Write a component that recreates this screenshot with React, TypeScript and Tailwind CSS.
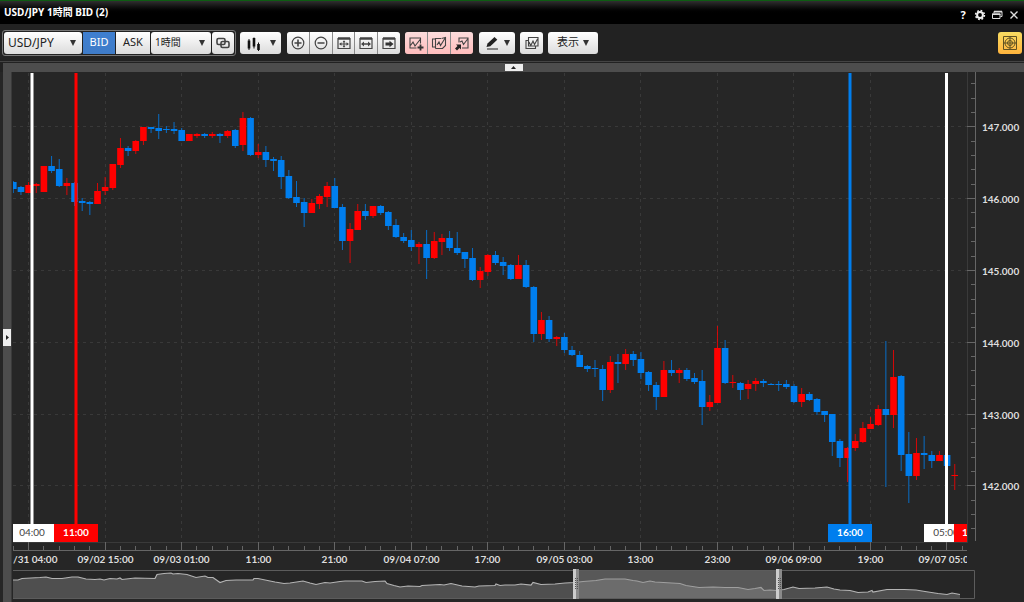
import { useState } from "react";
import type { ReactNode } from "react";

// [side, high, bodyTop, bodyBottom, low]
type Candle = ["u" | "d", number, number, number, number];

const STEP = 7.654;
const FIRST_X = 13.3;
const UP = "#ff0000";
const DOWN = "#007eee";

const candles: Candle[] = [
  ["d", 181, 182, 189, 193], ["d", 186, 187, 192, 195], ["u", 182, 185, 193, 193], ["u", 183, 184, 186, 193],
  ["u", 166, 166, 192, 192], ["d", 156, 166, 171, 173], ["d", 159, 169, 186, 187], ["u", 178, 183, 186, 195],
  ["d", 182, 183, 202, 206], ["d", 198, 201, 203, 211], ["d", 201, 202, 204, 215], ["u", 183, 191, 204, 204],
  ["u", 177, 187, 191, 195], ["u", 164, 164, 188, 190], ["u", 138, 148, 165, 168], ["d", 146, 148, 151, 156],
  ["u", 140, 141, 151, 154], ["u", 127, 127, 141, 145], ["d", 127, 127, 129, 133], ["d", 114, 128, 131, 139],
  ["d", 126, 129, 130, 133], ["d", 122, 129, 131, 134], ["d", 128, 130, 141, 141], ["u", 134, 134, 141, 141],
  ["u", 133, 134, 136, 138], ["d", 133, 134, 136, 138], ["u", 132, 134, 136, 138], ["d", 133, 134, 136, 143],
  ["u", 130, 131, 136, 138], ["d", 129, 130, 146, 148], ["u", 112, 118, 145, 151], ["d", 117, 118, 155, 156],
  ["u", 144, 152, 155, 158], ["d", 146, 152, 160, 167], ["d", 157, 159, 161, 171], ["d", 156, 160, 177, 189],
  ["d", 170, 176, 198, 199], ["d", 181, 197, 203, 207], ["d", 198, 202, 213, 227], ["u", 199, 203, 213, 213],
  ["u", 194, 196, 204, 209], ["u", 182, 186, 197, 207], ["d", 178, 186, 208, 208], ["d", 204, 207, 241, 250],
  ["u", 223, 229, 241, 263], ["u", 204, 211, 230, 230], ["d", 204, 211, 216, 220], ["u", 206, 206, 216, 218],
  ["d", 205, 206, 213, 215], ["d", 211, 212, 226, 230], ["d", 219, 225, 237, 238], ["d", 233, 237, 241, 243],
  ["d", 230, 240, 247, 251], ["u", 242, 244, 247, 264], ["d", 230, 244, 258, 279], ["u", 232, 241, 258, 259],
  ["u", 234, 238, 242, 255], ["d", 231, 238, 248, 251], ["d", 232, 248, 253, 255], ["d", 252, 252, 259, 268],
  ["d", 248, 258, 280, 281], ["u", 267, 271, 280, 288], ["u", 254, 255, 272, 276], ["d", 251, 255, 263, 265],
  ["d", 257, 262, 266, 275], ["d", 264, 265, 279, 280], ["u", 255, 265, 279, 279], ["d", 260, 265, 287, 288],
  ["d", 286, 287, 334, 342], ["u", 312, 320, 334, 340], ["d", 316, 320, 339, 342], ["u", 336, 337, 339, 346],
  ["d", 333, 337, 350, 353], ["d", 346, 350, 355, 356], ["d", 351, 355, 367, 367], ["d", 365, 366, 369, 372],
  ["d", 360, 368, 369, 377], ["d", 365, 369, 390, 401], ["u", 356, 362, 390, 393], ["d", 354, 362, 364, 383],
  ["u", 349, 354, 364, 370], ["d", 351, 354, 360, 366], ["d", 352, 359, 373, 379], ["d", 371, 372, 385, 391],
  ["d", 382, 385, 397, 410], ["u", 361, 370, 397, 397], ["d", 360, 370, 373, 376], ["u", 368, 370, 373, 383],
  ["d", 368, 370, 379, 381], ["d", 373, 378, 382, 384], ["d", 370, 381, 407, 425], ["u", 395, 402, 407, 411],
  ["u", 326, 348, 403, 403], ["d", 340, 348, 383, 384], ["u", 375, 382, 383, 388], ["d", 382, 383, 390, 400],
  ["u", 380, 384, 389, 399], ["u", 378, 381, 384, 391], ["d", 379, 381, 383, 387], ["d", 383, 384, 385, 385],
  ["d", 381, 384, 385, 391], ["d", 380, 384, 387, 389], ["d", 384, 386, 402, 403], ["u", 388, 394, 402, 407],
  ["d", 392, 394, 400, 401], ["d", 398, 399, 412, 415], ["d", 411, 411, 415, 422], ["d", 414, 414, 442, 456],
  ["d", 439, 441, 458, 467], ["u", 447, 448, 458, 482], ["u", 434, 441, 448, 451], ["u", 422, 428, 442, 443],
  ["u", 417, 424, 429, 429], ["u", 405, 409, 425, 426], ["d", 341, 409, 415, 487], ["u", 350, 377, 415, 428],
  ["d", 375, 376, 455, 471], ["d", 432, 454, 476, 503], ["u", 438, 453, 476, 480], ["d", 436, 453, 455, 469],
  ["d", 451, 455, 461, 468], ["u", 451, 455, 461, 461], ["d", 454, 455, 466, 466], ["u", 464, 475, 476, 490],
];

// the first label starts outside the plot, so only its tail is kept
const timeLabels = [
  "/31 04:00", "09/02 15:00", "09/03 01:00", "11:00", "21:00", "09/04 07:00", "17:00",
  "09/05 03:00", "13:00", "23:00", "09/06 09:00", "19:00", "09/07 05:00",
];
const priceLabels = ["147.000", "146.000", "145.000", "144.000", "143.000", "142.000"];

const timeX = (i: number) => Math.round(28 + i * STEP) + 0.5;
const priceY = (i: number) => Math.round(126.3 + i * 71.8) + 0.5;

const overview =
  "13,580 18,580 22,578.5 40,577.5 46,577 52,578.5 62,578.5 72,577 78,577 86,579 95,579.5 100,579 104,580 110,578.5 117,579 120,578 122,579.5 135,578 155,578.5 157,574.5 164,573.5 171,573 173,574 178,573.5 187,574.5 196,577.5 205,576 208,577.5 213,577.5 220,582.5 226,580.5 236,580 253,580 254,578.5 258,578.5 270,581 275,582 284,583.5 290,583 303,581 310,583 316,584.5 325,582.5 330,583 340,581.5 345,581 362,581 366,582.5 375,581.5 385,581 387,583.5 394,585.5 400,587 408,586 420,586.5 422,585.5 440,584.5 444,585 451,583.5 462,586 475,587 479,586 495,585.5 496,584 500,585.5 505,585 515,585 521,584 531,585 533,582.5 541,584.5 555,584 565,583 575,582.5 583,581.5 596,580.5 605,579 625,579 633,580.5 637,581 643,582.5 650,581 655,582 680,583.5 686,585.5 699,587.5 713,587 725,587.5 738,587.5 748,589.5 755,588.5 761,587.5 764,590.5 770,590 776,590.5 784,589.5 793,587 799,588.5 815,588 827,587 834,589 840,590 850,590.5 858,592.5 868,592 872,590.5 873,592 887,589.5 904,589.5 916,590 925,591.5 938,593.5 947,594.5 952,593 960,594.5";

function Icon({ children }: { children: ReactNode }) {
  return (
    <svg viewBox="0 0 16 16" className="size-4 shrink-0" fill="none" stroke="#444" strokeWidth="1.2">
      {children}
    </svg>
  );
}

function Caret() {
  return (
    <svg viewBox="0 0 6 6" className="size-1.5 shrink-0" fill="#333">
      <path d="M0 0h6L3 6z" />
    </svg>
  );
}

const face = "bg-linear-to-b from-white to-[#dcdcdc] text-[#222]";
const pinkFace = "bg-linear-to-b from-[#fbdcdc] to-[#ffbcbc]";
const group = "flex h-[22px] gap-px overflow-hidden rounded-[3px] bg-[#8a8a8a]";

function ToolButton({ label, className, children }: { label: string; className: string; children: ReactNode }) {
  return (
    <button type="button" aria-label={label} title={label} className={`flex h-[22px] items-center justify-center ${className}`}>
      {children}
    </button>
  );
}

function Picker({ label, options, className }: { label: string; options: string[]; className: string }) {
  return (
    <div className={`relative flex items-center ${className}`}>
      <select aria-label={label} className={`h-[22px] w-full appearance-none rounded-[3px] pl-1 ${face}`}>
        {options.map((o) => (
          <option key={o}>{o}</option>
        ))}
      </select>
      <span className="pointer-events-none absolute right-1.5">
        <Caret />
      </span>
    </div>
  );
}

function TitleBar() {
  return (
    <header className="flex h-6 items-center justify-between border-t border-[#0d5c12] bg-linear-to-b from-[#303030] via-black via-60% to-black pr-0.5 pl-1 text-white">
      <h1 className="text-[10px] font-bold">USD/JPY 1時間 BID (2)</h1>
      <div className="flex items-center gap-px pt-1">
        <button type="button" aria-label="ヘルプ" className="w-4 text-[11px] leading-3 font-bold">
          ?
        </button>
        <button type="button" aria-label="設定" className="flex w-4 justify-center">
          <svg viewBox="0 0 12 12" className="size-3" fill="none" stroke="#eee">
            <circle cx="6" cy="6" r="2.9" strokeWidth="2" />
            <circle cx="6" cy="6" r="4.4" strokeWidth="1.6" strokeDasharray="1.75 1.705" />
          </svg>
        </button>
        <button type="button" aria-label="元に戻す" className="flex w-4 justify-center">
          <svg viewBox="0 0 12 12" className="size-3" fill="none" stroke="#ddd">
            <path d="M3 4V2.5h8v5H9.500" />
            <path d="M1.500 5h7.500v4.500H1.500z" />
            <path d="M1 5.200h8.500M3 2.600h8" strokeWidth="1.600" />
          </svg>
        </button>
        <button type="button" aria-label="閉じる" className="flex w-4 justify-center">
          <svg viewBox="0 0 10 10" className="size-2.5" fill="none" stroke="#ddd" strokeWidth="1.4">
            <path d="M1.500 1.500l7 7M8.500 1.500l-7 7" />
          </svg>
        </button>
      </div>
    </header>
  );
}

function Toolbar() {
  const [side, setSide] = useState<"BID" | "ASK">("BID");
  const sideClass = (s: string) =>
    s === side ? "bg-linear-to-b from-[#3f7fd0] to-[#3f7cc8] text-white" : face;

  return (
    <div className="flex h-[37px] items-center gap-1 bg-[#222] px-0.5 text-[11px]">
      <div className="flex h-[26px] items-center gap-px rounded-[3px] border border-[#777] px-px">
        <Picker label="通貨ペア" options={["USD/JPY"]} className="w-[78px] text-[12px]" />
        <button type="button" onClick={() => setSide("BID")} className={`h-[22px] w-8 ${sideClass("BID")}`}>
          BID
        </button>
        <button type="button" onClick={() => setSide("ASK")} className={`h-[22px] w-[34px] ${sideClass("ASK")}`}>
          ASK
        </button>
        <Picker label="足種" options={["1時間"]} className="w-[60px] text-[10px]" />
        <ToolButton label="連動" className={`w-[22px] rounded-[3px] ${face}`}>
          <Icon>
            <rect x="2" y="3.500" width="8" height="6" rx="1.500" strokeWidth="1.600" />
            <rect x="6" y="6.500" width="8" height="6" rx="1.500" strokeWidth="1.600" />
          </Icon>
        </ToolButton>
      </div>

      <ToolButton label="チャート種類" className={`w-[41px] gap-2 rounded-[3px] ${face}`}>
        <Icon>
          <path d="M3 4v11M8 2.500v11M12.500 7.500V16" stroke="#111" strokeWidth="1" />
          <path d="M3 5.500v8M8 3v8.500M12.500 9v6" stroke="#111" strokeWidth="2.600" />
        </Icon>
        <Caret />
      </ToolButton>

      <div className={`${group} ml-0.5`}>
        <ToolButton label="拡大" className={`w-[22px] ${face}`}>
          <Icon>
            <circle cx="8" cy="8" r="5.800" />
            <path d="M8 4.500v7M4.500 8h7" strokeWidth="1.600" />
          </Icon>
        </ToolButton>
        <ToolButton label="縮小" className={`w-[22px] ${face}`}>
          <Icon>
            <circle cx="8" cy="8" r="5.800" />
            <path d="M4.500 8h7" strokeWidth="1.600" />
          </Icon>
        </ToolButton>
        <ToolButton label="全体表示" className={`w-[21px] ${face}`}>
          <Icon>
            <path d="M2 3.500h12v10H2z" />
            <path d="M2 3.500h12" strokeWidth="2.500" />
            <path d="M4 9h8M8 6v6" strokeWidth="1" />
            <path d="M5.500 7.200L3 9l2.500 1.800zM10.500 7.200L13 9l-2.500 1.800zM6.500 7.300L8 5.200l1.500 2.100zM6.500 10.700L8 12.800l1.500-2.100z" fill="#444" stroke="none" />
          </Icon>
        </ToolButton>
        <ToolButton label="横幅調整" className={`w-[22px] ${face}`}>
          <Icon>
            <path d="M2 3.500h12v10H2z" />
            <path d="M2 3.500h12" strokeWidth="2.500" />
            <path d="M4 9h8" strokeWidth="1.300" />
            <path d="M6 6.500L3 9l3 2.500zM10 6.500L13 9l-3 2.500z" fill="#444" stroke="none" />
          </Icon>
        </ToolButton>
        <ToolButton label="最新へ" className={`w-[22px] ${face}`}>
          <Icon>
            <path d="M2 3.500h12v10H2z" />
            <path d="M2 3.500h12" strokeWidth="2.500" />
            <path d="M4.500 7.500h4V5.800l4 3.200-4 3.200v-1.700h-4z" fill="#333" stroke="none" />
          </Icon>
        </ToolButton>
      </div>

      <div className={`${group} ml-px`}>
        <ToolButton label="テクニカル追加" className={`w-[22px] ${pinkFace}`}>
          <Icon>
            <path d="M8.500 13H2V3h10.500v5.500M2.500 10.500L5 7l2 4 5.500-7" strokeWidth="1.100" />
            <path d="M12.500 9.500v6M9.500 12.500h6" stroke="#333" strokeWidth="1.800" />
          </Icon>
        </ToolButton>
        <ToolButton label="テクニカル編集" className={`w-[22px] ${pinkFace}`}>
          <Icon>
            <path d="M4.500 12H1.500V4h3M4.500 13.500V3.500H10M14.500 6v4.500L11.500 13.500h-7M6 10l2-3 1.500 3.500L14.500 2.500M10.500 3.500L14.500 2.500V6" strokeWidth="1.100" />
          </Icon>
        </ToolButton>
        <ToolButton label="テクニカル保存" className={`w-[22px] ${pinkFace}`}>
          <Icon>
            <path d="M5 7.500V3h9v10H8M6 7l2-1 1.500 3.500L14 3.500" strokeWidth="1.100" />
            <path d="M2 9.500h5v5L5.500 13 3 15.500 1 13.500 3.500 11z" fill="#222" stroke="none" />
          </Icon>
        </ToolButton>
      </div>

      <ToolButton label="描画" className={`ml-0.5 w-9 gap-1 rounded-[3px] ${face}`}>
        <Icon>
          <path d="M2.500 12l1-3.500L10.500 2l2.800 2.800-7 6.500z" fill="#222" stroke="none" />
          <path d="M3 14h11" />
        </Icon>
        <Caret />
      </ToolButton>

      <ToolButton label="チャート複製" className={`ml-px w-[23px] rounded-[3px] ${face}`}>
        <Icon>
          <path d="M4.500 5.500v-3H14v8.500h-2.500M4.500 5.500H2v8h9.500V11M4.500 5.500V11h7M5 7l1.800 3.500L9 6l1.500 3.500L13.500 4" strokeWidth="1.100" />
        </Icon>
      </ToolButton>

      <button type="button" className={`ml-px flex h-[22px] w-[50px] items-center justify-center gap-1 rounded-[3px] text-[11px] ${face}`}>
        表示
        <Caret />
      </button>

      <ToolButton label="全画面" className="ml-auto w-6 rounded-[3px] bg-linear-to-b from-[#f8dc62] to-[#ffb43c]">
        <svg viewBox="0 0 16 16" className="size-4" fill="none" stroke="#5f5222">
          <path d="M1.500 1.500h13v13h-13zM8 1.500v13M1.500 8h13" />
          <circle cx="8" cy="8" r="5" />
          <circle cx="8" cy="8" r="2.500" />
        </svg>
      </ToolButton>
    </div>
  );
}

interface TimeMarkerProps {
  x: number;
  left: number;
  width: number;
  label: string;
  color: string;
  textColor: string;
}

function TimeMarker({ x, left, width, label, color, textColor }: TimeMarkerProps) {
  return (
    <g>
      <rect x={x - 1.5} y="73" width="3" height="452" fill={color} />
      <rect x={left} y="524" width={width} height="18" fill={color} />
      <text x={left + 22} y="536" textAnchor="middle" fontSize="10" fontWeight={textColor === "#fff" ? 700 : 400} fill={textColor}>
        {label}
      </text>
    </g>
  );
}

function PriceChart() {
  return (
    <svg viewBox="13 72 1011 496" className="block h-auto w-full font-[Lato,sans-serif]" role="img" aria-label="USD/JPY 1時間足">
      <defs>
        <clipPath id="plot">
          <rect x="13" y="72" width="954" height="496" />
        </clipPath>
      </defs>

      <g stroke="#393939" strokeDasharray="3 4">
        {priceLabels.map((p, i) => (
          <path key={p} d={`M13 ${priceY(i)}H967`} />
        ))}
        {timeLabels.map((t, i) => (
          <path key={t + i} d={`M${timeX(i * 10)} 73V542`} />
        ))}
      </g>
      <path d="M967.5 72V542.5H13" fill="none" stroke="#3a3a3a" />

      <g clipPath="url(#plot)">
        {candles.map(([side, high, top, bottom, low], i) => {
          const x = FIRST_X + i * STEP;
          const color = side === "u" ? UP : DOWN;
          return (
            <g key={i} fill={color}>
              <rect x={x - 0.5} y={high} width="1" height={low - high} opacity="0.8" />
              <rect x={x - 3.3} y={top} width="6.6" height={bottom - top} />
            </g>
          );
        })}
        <TimeMarker x={32} left={10} width={44} label="04:00" color="#fff" textColor="#444" />
        <TimeMarker x={76} left={54} width={44} label="11:00" color="#f00" textColor="#fff" />
        <TimeMarker x={850} left={828} width={44} label="16:00" color={DOWN} textColor="#fff" />
        <TimeMarker x={946.5} left={924} width={43} label="05:00" color="#fff" textColor="#444" />
        <rect x="954" y="524" width="14" height="18" fill="#f00" />
        <text x="962" y="536" fontSize="10" fontWeight="700" fill="#fff">
          11:00
        </text>

        <g stroke="#666">
          <path d="M13 550.5H967" />
          {Array.from({ length: 63 }, (_, i) => (
            <path key={i} d={`M${timeX((i - 1) * 2)} ${(i - 1) % 5 === 0 ? 542 : 546}V550`} />
          ))}
        </g>
        <g fill="#ddd" fontSize="10" fontWeight="700">
          {timeLabels.map((t, i) => (
            <text key={t + i} x={i === 0 ? 13 : timeX(i * 10)} y="563" textAnchor={i === 0 ? "start" : "middle"}>
              {t}
            </text>
          ))}
        </g>
      </g>

      <g stroke="#666">
        <path d="M975.5 72V541" />
        {Array.from({ length: 32 }, (_, i) => {
          const y = Math.round(126.3 + (i - 3) * 14.36) + 0.5;
          return <path key={i} d={`M${(i - 3) % 5 === 0 ? 967 : 971} ${y}H975`} />;
        })}
      </g>
      <g fill="#ddd" fontSize="10" fontWeight="700">
        {priceLabels.map((p, i) => (
          <text key={p} x="982" y={priceY(i) + 4}>
            {p}
          </text>
        ))}
      </g>
    </svg>
  );
}

function RangeHandle({ x }: { x: number }) {
  return (
    <g>
      <rect x={x} y="569" width="6" height="30" fill="#8a8a8a" />
      <rect x={x} y="569" width="3" height="30" fill="#ccc" />
      <path d={`M${x + 2.5} 578v12M${x + 4.5} 578v12`} stroke="#555" strokeDasharray="1 1" />
    </g>
  );
}

function Overview() {
  return (
    <svg viewBox="13 568 1011 34" className="block h-auto w-full" role="img" aria-label="表示範囲">
      <polygon points={`13,598 ${overview} 960,598`} fill="#4f4f4f" />
      <polyline points={overview} fill="none" stroke="#b4b4b4" strokeWidth="1.2" />
      <rect x="576" y="570" width="203" height="28" fill="#8a8a8a" opacity="0.5" />
      <path d="M13 570.5H974.5V598.5H13" fill="none" stroke="#5c5c5c" />
      <RangeHandle x={573} />
      <RangeHandle x={776} />
    </svg>
  );
}

export default function App() {
  return (
    <div className="min-h-screen bg-[#262626] font-['Noto_Sans','Noto_Sans_CJK_JP',sans-serif]">
      <TitleBar />
      <Toolbar />
      <div className="border-t border-[#444] bg-[#222] pt-px pl-[3px]">
        <div className="flex h-[9px] items-center justify-center bg-[#4d4d4d]">
          <button type="button" aria-label="パネルを閉じる" className="flex h-[7px] w-[18px] items-center justify-center bg-[#eee]">
            <svg viewBox="0 0 5 3" className="h-[3px] w-[5px]" fill="#222">
              <path d="M0 3L2.500 0 5 3z" />
            </svg>
          </button>
        </div>
      </div>
      <main className="flex pl-[3px]">
        <div className="mr-px flex w-[9px] shrink-0 items-center border-r border-[#3a3a3a] bg-[#4d4d4d]">
          <button type="button" aria-label="サイドパネルを開く" className="flex h-[17px] w-[9px] items-center justify-center bg-[#eee]">
            <svg viewBox="0 0 3 5" className="h-[5px] w-[3px]" fill="#222">
              <path d="M0 0l3 2.500L0 5z" />
            </svg>
          </button>
        </div>
        <div className="min-w-0 flex-1">
          <PriceChart />
          <Overview />
        </div>
      </main>
    </div>
  );
}
